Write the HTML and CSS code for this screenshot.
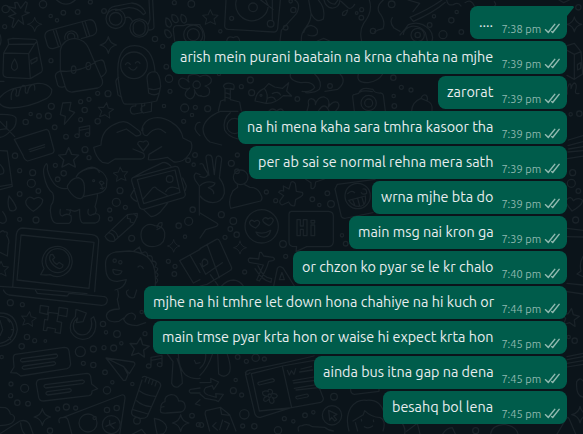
FILE: index.html
```
<!DOCTYPE html>
<html lang="en">
<head>
<meta charset="utf-8">
<title>Chat</title>
<link rel="stylesheet" href="styles.css">
</head>
<body>
<svg class="wallpaper" viewBox="0 0 1749 1302" aria-hidden="true">
<defs>
<path id="spark" d="M0-25Q4-4 25 0Q4 4 0 25Q-4 4-25 0Q-4-4 0-25Z"/>
<path id="star" d="M0-26L8-8L27-6L13 7L18 26L0 17L-18 26L-13 7L-27-6L-8-8Z"/>
<path id="note" d="M-13 12V-14L20-20V8M-13-5L20-11M-13 12A7 6 0 1 1-20 6Q-15 5-13 12M20 8A7 6 0 1 1 13 2Q18 1 20 8"/>
</defs>
<!-- top left -->
<g>
<circle cx="129" cy="13" r="11"/><circle cx="17" cy="27" r="11"/><circle cx="152" cy="48" r="5"/><circle cx="171" cy="61" r="5"/><circle cx="190" cy="38" r="7"/><circle cx="233" cy="36" r="7"/><circle cx="271" cy="6" r="6"/><circle cx="312" cy="33" r="7"/><circle cx="14" cy="80" r="6"/><circle cx="153" cy="182" r="6"/><circle cx="465" cy="117" r="8"/><circle cx="488" cy="139" r="6"/><circle cx="523" cy="8" r="6"/><circle cx="574" cy="12" r="10"/><circle cx="499" cy="200" r="7"/><circle cx="507" cy="236" r="11"/><circle cx="510" cy="274" r="6"/><circle cx="293" cy="280" r="6"/><circle cx="324" cy="281" r="9"/><circle cx="267" cy="298" r="6"/><circle cx="242" cy="305" r="6"/><circle cx="254" cy="330" r="8"/><circle cx="242" cy="359" r="6"/><circle cx="293" cy="364" r="8"/><circle cx="154" cy="319" r="9"/><circle cx="92" cy="342" r="5"/><circle cx="117" cy="348" r="7"/><circle cx="145" cy="348" r="9"/><circle cx="77" cy="366" r="8"/><circle cx="164" cy="382" r="7"/><circle cx="198" cy="410" r="7"/><circle cx="492" cy="318" r="5"/><circle cx="554" cy="324" r="12"/><circle cx="586" cy="322" r="6"/><circle cx="576" cy="345" r="5"/><circle cx="551" cy="364" r="6"/>
<path d="M22 19L47 25L44 8L52 7L62 25L77 5L82 9L75 36L88 38L66 48L71 73L55 60L40 83L36 80L42 56L26 49L48 41Z"/>
<use href="#spark" transform="translate(104 73) scale(.85)"/><use href="#spark" x="325" y="135"/>
<path d="M170 0Q198 25 226 0M0 104Q6 120 0 135M0 244H12"/>
<path d="M11 159L9 220Q9 231 20 232L91 236L123 217Q128 214 127 205L111 124Q110 118 104 118L39 115L24 118L26 133L11 159L86 161L104 132L26 133M86 161L91 236M104 132L111 124M44 177Q32 194 35 204Q43 218 52 204Q54 194 44 177M92 181L111 172V182L94 192Z"/>
<path d="M146 92L265 60Q280 56 286 72L290 88Q291 101 278 106L244 116M180 139L159 146Q146 147 142 135L135 111Q133 98 146 92M160 92L175 138M168 90L183 136M247 67L261 111M255 64L269 108M195 119A20 20 0 1 1 234 114M204 116A11 11 0 1 1 224 113"/>
<path d="M181 211V151Q187 118 224 115Q256 119 266 145L289 199L307 240Q311 258 293 264L217 276Q201 277 196 261ZM182 213Q235 219 287 187M183 212L171 218Q163 224 168 236L173 255Q178 265 193 260M286 185L303 180Q312 180 314 194L319 213Q317 223 305 230"/>
<ellipse cx="221" cy="209" rx="7" ry="11"/><ellipse cx="265" cy="198" rx="7" ry="11"/>
<path d="M0 292Q17 270 55 262L112 250Q141 248 155 268Q157 285 139 296Q84 324 30 324Q8 322 0 312M34 298Q31 276 43 266Q51 264 49 278Q44 292 56 287Q59 263 69 256Q77 255 76 268Q74 282 83 279Q85 260 97 254Q106 251 104 270"/>
<path d="M318 56A29 29 0 1 1 376 57A29 29 0 1 1 318 56M328 56A19 19 0 1 1 366 57A19 19 0 1 1 328 56M390 84A27 27 0 1 1 445 84A27 27 0 1 1 390 84M400 84A18 18 0 1 1 435 84A18 18 0 1 1 400 84M376 54Q389 46 397 63M322 43Q326 22 343 19L395 9Q426 12 437 39L430 44Q413 22 386 23Q355 30 347 31M447 0L450 58L445 72M458 0L462 82Q460 90 447 90"/>
<path d="M356 232Q346 239 348 248L354 285L365 292M354 230Q348 135 405 137Q459 139 465 215Q480 219 482 259L476 286L470 303Q415 315 374 312Q363 309 354 230M446 279L441 234Q442 215 465 215M446 279Q463 289 476 280M447 266Q463 272 480 264"/><circle cx="402" cy="196" r="40"/>
<path d="M376 194Q382 182 391 193M406 189Q413 180 420 190M387 202Q400 219 411 201M408 312L407 318Q390 317 391 331Q392 343 404 342L425 338V311M434 310V317Q421 318 423 332L430 339L454 334L455 307"/>
<path d="M498 54Q509 55 515 73Q512 83 506 81Q494 77 498 54M516 44Q532 43 535 62Q532 70 524 67Q513 61 516 44M544 43Q561 46 559 65Q552 73 547 66Q540 58 544 43M495 90Q509 88 515 106Q508 119 499 109Q492 99 495 90"/>
<path d="M600 74L562 73L551 77H530Q519 78 520 92L524 123"/><circle cx="580" cy="104" r="29"/><circle cx="580" cy="104" r="18"/>
<path d="M600 230Q589 218 567 226Q561 237 567 246Q548 226 537 241Q533 257 548 264Q561 270 569 264Q550 279 558 289Q574 306 583 286Q586 275 583 269Q592 291 604 287"/><circle cx="590" cy="254" r="11"/>
<path d="M188 309L213 307L208 331L224 337L193 373L196 349L181 344Z"/><use href="#star" transform="translate(317 330) scale(.86) rotate(8)"/><use href="#note" transform="translate(250 396) scale(.95)"/>
<path d="M0 343Q43 342 48 354Q51 380 32 392Q15 411 0 412M0 364L44 410M20 364V386L0 389M43 418L139 388Q146 389 148 398L162 450Q163 459 154 461L83 483Q73 480 69 466ZM87 449L134 434M90 455L134 441"/>
<path d="M303 435Q304 391 343 373Q373 357 391 373L418 393Q430 407 408 408L379 387L351 397M425 391Q430 360 460 354Q488 349 515 367Q543 383 549 414L573 426Q580 443 568 462M429 384Q424 407 441 407Q462 382 482 388L497 398M303 435L281 442Q287 472 307 487L325 490L345 477H424Q438 473 431 460L399 447M568 462Q550 489 522 486L502 472Q462 481 445 479L447 463L485 440M430 453L413 432Q414 420 430 426Q443 417 446 432Z"/>
<path d="M600 367Q589 366 586 380Q582 390 600 407"/>
</g>
<!-- middle left -->
<g transform="translate(0 435)">
<circle cx="45" cy="32" r="8"/><circle cx="255" cy="14" r="9"/><circle cx="267" cy="38" r="6"/><circle cx="59" cy="77" r="6"/><circle cx="98" cy="83" r="9"/><circle cx="94" cy="115" r="12"/><circle cx="115" cy="138" r="7"/><circle cx="59" cy="147" r="7"/><circle cx="166" cy="61" r="6"/><circle cx="191" cy="85" r="8"/><circle cx="173" cy="103" r="7"/><circle cx="59" cy="223" r="6"/><circle cx="108" cy="225" r="9"/><circle cx="360" cy="137" r="9"/><circle cx="349" cy="172" r="12"/><circle cx="376" cy="187" r="6"/><circle cx="329" cy="195" r="6"/><circle cx="331" cy="222" r="6"/><circle cx="395" cy="280" r="9"/><circle cx="564" cy="46" r="7"/><circle cx="585" cy="30" r="7"/><circle cx="581" cy="59" r="5"/><circle cx="578" cy="194" r="8"/><circle cx="566" cy="229" r="12"/><circle cx="536" cy="242" r="8"/><circle cx="555" cy="275" r="5"/><circle cx="505" cy="349" r="6"/><circle cx="525" cy="364" r="6"/><circle cx="523" cy="387" r="7"/>
<path d="M0 17L22 18L37 124L0 134M0 124L36 118M0 58Q17 75 9 86L0 88"/>
<use href="#star" transform="translate(206 37) scale(1.12)"/><use href="#star" transform="translate(362 87) scale(.8) rotate(-5)"/><use href="#star" transform="translate(3 371) scale(.85)"/>
<path d="M27 153Q46 176 49 189Q45 201 30 196Q20 180 27 153M8 200Q22 219 18 229Q10 239 0 232M100 199Q73 181 78 167Q86 149 102 162Q117 151 128 164Q130 180 100 199Z"/>
<path d="M132 92Q127 69 139 56Q144 59 142 73Q148 98 164 118Q180 134 202 130M132 92Q139 130 158 144Q166 164 153 181L151 197Q154 235 170 235H207Q217 230 213 212Q200 203 187 213Q177 212 181 193M207 209Q218 195 200 194M211 194Q225 204 239 193Q238 236 251 234H286Q302 229 298 211Q288 201 273 211Q260 210 265 193M281 209Q294 200 285 185Q294 154 292 147M206 117Q216 99 235 98Q252 103 253 123Q256 156 242 161Q223 162 206 135Q198 124 206 117M229 95Q242 71 281 69Q312 77 321 103L319 127Q312 143 295 145L251 155M252 74Q275 60 291 71L298 82M298 112Q306 104 312 115L304 120ZM305 121L308 132L301 130M308 132L313 127"/><circle cx="281" cy="107" r="3"/>
<path d="M398 98L525 64Q533 63 536 70L556 148Q557 154 550 158L430 193Q420 193 418 185L395 108Q394 100 398 98M412 104L525 75L540 142L431 176ZM428 163L459 128Q465 123 471 132L501 151M497 140Q509 119 534 131M399 98L431 80L488 53Q500 50 513 64M404 131L392 151Q394 162 410 169M430 193L452 214Q462 217 480 202L503 174M548 99L559 123L556 136"/><circle cx="509" cy="102" r="10"/>
<path d="M317 271L382 209L412 205Q414 213 401 236L342 289Q323 292 315 274M325 263Q343 266 345 286M334 255Q350 259 354 277M383 210L382 220L391 222V231L402 234M401 206L412 216"/>
<path d="M464 242Q443 231 427 252Q419 268 427 289Q442 311 470 303Q498 295 494 262Q489 242 464 242M471 248Q475 230 486 233Q489 247 471 254"/>
<use href="#spark" transform="translate(521 303) scale(.75)"/>
<path d="M38 427L49 268Q52 250 68 249L276 269Q296 272 296 289L284 440M51 405L63 270L282 292L267 430L51 405M0 424L45 427L261 446M0 262Q10 253 13 261Q26 258 20 272Q30 287 25 298L22 333L0 322"/>
<path d="M122 389L132 371A45 45 0 1 1 150 389Q140 391 122 389"/><circle cx="173" cy="347" r="36"/><path d="M152 329Q147 336 150 346Q160 365 178 371Q188 370 189 360L177 352L171 358Q161 354 158 343L164 338L158 328Z"/>
<path d="M347 321Q313 327 317 365Q317 410 352 409L379 404Q374 430 345 435M347 321L388 318Q455 323 464 376Q470 420 462 440M402 318L418 306L425 325M425 325Q441 313 443 333M443 333Q459 327 457 348M457 348Q475 349 465 366Q481 369 466 382Q482 388 467 398Q480 406 466 416M339 373L366 378Q362 390 350 389Q337 386 339 373M414 366Q422 358 430 370"/><circle cx="344" cy="347" r="5"/><circle cx="361" cy="352" r="5"/>
<path d="M600 313L539 347L580 414L600 404M570 330L600 383"/><path d="M600 89L588 84Q578 91 586 106L598 123V210"/>
</g>
<!-- bottom left -->
<g transform="translate(0 870)">
<circle cx="31" cy="38" r="9"/><circle cx="67" cy="44" r="6"/><circle cx="309" cy="102" r="8"/><circle cx="318" cy="127" r="5"/><circle cx="351" cy="132" r="10"/><circle cx="425" cy="66" r="5"/><circle cx="435" cy="131" r="6"/><circle cx="81" cy="141" r="8"/><circle cx="104" cy="152" r="6"/><circle cx="136" cy="153" r="4"/><circle cx="65" cy="169" r="8"/><circle cx="241" cy="185" r="15"/><circle cx="280" cy="177" r="9"/><circle cx="312" cy="173" r="6"/><circle cx="341" cy="174" r="9"/><circle cx="364" cy="160" r="5"/><circle cx="250" cy="220" r="6"/><circle cx="280" cy="225" r="8"/><circle cx="315" cy="247" r="7"/><circle cx="337" cy="277" r="5"/><circle cx="321" cy="301" r="11"/><circle cx="397" cy="282" r="5"/><circle cx="5" cy="201" r="5"/><circle cx="33" cy="282" r="6"/><circle cx="74" cy="295" r="12"/><circle cx="32" cy="317" r="6"/><circle cx="52" cy="338" r="8"/><circle cx="84" cy="341" r="7"/><circle cx="173" cy="357" r="6"/><circle cx="199" cy="351" r="9"/><circle cx="227" cy="354" r="6"/><circle cx="150" cy="422" r="8"/><circle cx="576" cy="377" r="7"/><circle cx="595" cy="404" r="6"/>
<path d="M10 0Q16 12 27 15L305 46Q321 46 322 30Q321 19 307 19L207 10L202 18L112 10L106 0M353 0Q358 16 352 28L358 57Q320 58 319 78Q322 100 357 94L371 84M371 88Q382 67 398 70Q412 77 403 88M372 90Q378 106 411 107L437 98M410 0L403 22Q390 28 381 14Q376 2 385 0"/>
<path d="M121 46L146 50L142 73L119 68ZM177 52L203 56L200 80L175 75ZM146 67L175 71L171 94L185 97L181 130L165 127L167 117L142 112L140 122L130 121L134 88L143 90Z"/>
<path d="M0 69Q48 69 52 119Q45 164 0 169M0 79Q38 81 41 119Q38 152 0 160M0 91L8 119L0 137M23 89L29 96M34 119H41M26 142L32 149"/><use href="#star" transform="translate(86 86) scale(.82) rotate(8)"/>
<path d="M228 58L259 69L249 95L229 98L233 84Q215 97 222 119Q235 141 260 132Q281 117 273 86L281 80L287 97Q291 129 267 144Q233 157 213 126Q205 101 226 80Z"/>
<path d="M46 193L193 172Q205 172 207 183L212 222Q211 232 201 236L62 258L50 249L32 248L42 231L40 206Q39 195 46 193M65 206L169 192Q178 199 166 204L66 216Q57 212 65 206M71 228L163 215Q171 221 162 225L72 238Q61 234 71 228"/>
<path d="M119 268L261 250Q270 250 272 260L275 282L293 296L276 303Q277 315 267 317L131 333Q118 333 116 322L109 282Q109 270 119 268M135 284L248 270Q259 275 247 281L137 294Q128 289 135 284M142 305L209 296Q219 300 209 306L143 315Q133 310 142 305"/>
<path d="M318 204L401 216Q406 218 404 225L388 251L371 230L384 254L377 271L370 271ZM318 204L371 230"/>
<use href="#star" transform="translate(418 171) rotate(8) scale(1.08)"/><use href="#note" transform="translate(466 216)"/>
<path d="M427 262Q433 257 440 261L474 275Q483 279 482 288L442 379Q435 387 419 385L399 377Q393 371 395 364L426 270M439 264L435 276M449 268L445 280M459 272L455 284M469 276L465 288M419 303Q437 317 466 319M410 332Q426 347 453 350M399 359L444 372"/><circle cx="411" cy="392" r="10"/>
<path d="M492 350Q478 350 482 366Q487 371 501 369L543 366Q559 360 555 345Q552 331 536 333Q532 313 513 314Q493 317 495 335Q481 338 482 359M502 192L519 215L515 280Q520 294 534 291L547 280Q547 246 531 205M535 192Q536 236 556 254Q578 269 600 265M583 211L588 221L600 218M600 294L572 298Q563 302 572 309H600M600 329L586 342L600 346"/>
<use href="#spark" transform="translate(127 381)"/><use href="#spark" transform="translate(542 399)"/>
<path d="M0 352L16 353Q29 359 31 372Q49 376 41 393Q35 405 0 407M0 431L60 393Q85 386 92 411L100 434M62 399Q64 424 76 434M178 398Q173 382 188 383Q201 378 205 393L216 434M188 383L365 315Q375 312 375 325L359 434M463 385Q495 391 500 412Q498 427 488 432L472 434Q466 412 463 385"/>
<circle cx="321" cy="360" r="8"/><circle cx="350" cy="354" r="8"/><circle cx="264" cy="399" r="27"/><circle cx="334" cy="404" r="27"/><circle cx="284" cy="384" r="5"/><path d="M329 391V404L318 409M330 404L342 415M330 404L346 398M394 434L425 418L438 434"/>
</g>
<!-- top centre -->
<g transform="translate(600 0)">
<path d="M78 0L74 77Q74 87 85 88L221 96Q231 96 233 85L241 0M109 0A49 49 0 1 0 205 17L197 0M146 22A13 13 0 1 0 172 22A13 13 0 1 0 146 22M217 0V62M182 0L219 28"/><circle cx="212" cy="71" r="10"/><circle cx="95" cy="55" r="6"/><circle cx="280" cy="30" r="8"/><circle cx="61" cy="94" r="5"/><circle cx="272" cy="4" r="5"/>
<use href="#star" transform="translate(31 51) scale(.85)"/><path d="M0 76Q19 101 12 123M80 123Q84 105 100 113Q116 103 119 123M284 0Q304 11 290 40L244 91L240 123M326 0L333 40Q334 60 319 80Q302 100 304 123M311 98Q316 78 333 76Q358 83 351 102Q343 112 324 105M333 40Q348 72 370 57Q377 24 355 0M372 0Q378 23 395 24Q418 25 420 0M382 0Q391 13 405 12L414 0M423 4L444 23Q454 30 464 13M443 30Q424 34 428 46Q438 49 443 30M508 0Q520 35 491 70Q477 93 485 123M550 0Q527 18 538 38Q558 63 549 86Q534 88 523 96M577 53Q567 67 582 84L600 94M352 123L371 115L389 123"/>
<circle cx="485" cy="29" r="6"/><circle cx="470" cy="39" r="4"/><circle cx="484" cy="53" r="7"/><circle cx="575" cy="13" r="10"/><circle cx="257" cy="83" r="7"/><circle cx="519" cy="93" r="8"/>
<circle cx="57" cy="222" r="5"/><circle cx="151" cy="240" r="9"/><circle cx="124" cy="260" r="6"/><circle cx="155" cy="278" r="9"/><circle cx="23" cy="326" r="9"/><circle cx="292" cy="297" r="7"/><circle cx="390" cy="258" r="7"/><circle cx="580" cy="233" r="8"/><circle cx="581" cy="288" r="5"/><circle cx="583" cy="318" r="7"/>
<path d="M0 230Q24 218 34 238Q36 252 15 258Q35 264 26 284Q15 294 0 287M70 258Q77 244 98 252Q105 255 101 268L91 265V299L119 306L124 333M75 303V266L70 258M75 265L99 268M75 278L91 283M75 291L91 296M75 299L62 303L55 333M9 386Q14 353 61 334H114M9 386Q9 409 30 426L65 435M91 338Q67 356 74 390Q83 409 114 417"/><circle cx="104" cy="378" r="23"/>
<path d="M165 303Q168 275 193 265L206 251L224 261L248 265L266 248L260 273L275 288L250 287Q225 312 198 310ZM193 265Q208 284 198 310M217 281Q236 272 242 285M204 294Q222 287 226 300"/><circle cx="183" cy="286" r="3"/>
<path d="M271 222Q267 242 303 248Q339 243 344 263Q333 278 306 274M344 222Q369 246 358 268Q344 280 317 278M420 222Q442 245 413 268L375 274M475 222Q467 250 505 248Q536 243 548 222M458 291Q457 284 465 283L476 280Q482 264 500 265L519 268Q523 280 542 279Q549 280 550 286L556 333M458 291L463 333M479 277Q489 270 517 275"/><circle cx="506" cy="309" r="23"/><circle cx="506" cy="309" r="12"/>
<path d="M321 333L326 315Q321 297 334 296Q349 299 346 314M346 314Q354 289 373 291Q393 298 385 321M385 321Q399 302 413 307Q423 317 407 333M355 333Q374 303 387 333M207 333Q217 321 230 333Q244 321 250 333"/>
</g>
<!-- middle centre -->
<g transform="translate(600 435)">
<circle cx="112" cy="30" r="6"/><circle cx="94" cy="55" r="9"/><circle cx="111" cy="79" r="7"/><circle cx="199" cy="141" r="6"/><circle cx="227" cy="167" r="6"/><circle cx="337" cy="163" r="7"/><circle cx="382" cy="145" r="7"/><circle cx="393" cy="177" r="10"/><circle cx="358" cy="180" r="5"/><circle cx="64" cy="209" r="9"/><circle cx="100" cy="228" r="10"/><circle cx="91" cy="252" r="7"/><circle cx="110" cy="269" r="8"/><circle cx="75" cy="277" r="6"/><circle cx="249" cy="297" r="10"/><circle cx="257" cy="334" r="6"/><circle cx="134" cy="381" r="6"/><circle cx="426" cy="271" r="5"/><circle cx="437" cy="296" r="7"/><circle cx="122" cy="97" r="22"/><circle cx="185" cy="244" r="50"/><circle cx="473" cy="153" r="38"/>
<path d="M0 57Q9 52 13 68L27 91L18 40Q17 29 27 30Q36 30 37 43L43 89L48 42Q50 30 60 34Q67 38 64 50L58 99Q75 120 73 145Q66 172 38 173Q14 171 0 153M0 94Q18 102 23 89M0 122Q18 105 45 114Q45 122 25 128Q43 136 41 146"/>
<path d="M112 118L113 127L99 137Q83 164 92 190L182 168Q190 160 182 148Q174 127 150 127L134 119M250 123L267 132L273 112Q281 107 286 116L289 139L307 142Q311 149 304 154L287 164L284 182Q273 185 266 171L246 180Q237 177 240 167L251 152L236 142Q239 135 251 138ZM405 132L424 215Q429 222 440 219L519 203M405 132L412 118L525 103M316 102L333 113V129Q340 135 345 124L347 111L373 102"/>
<path d="M443 146Q454 134 464 143M489 132Q501 130 500 145Q488 151 484 143M446 166L496 153Q500 178 485 183Q462 189 446 166M458 164L464 179M473 160L479 183M486 157L491 176"/>
<path d="M0 204L50 234Q58 239 49 244L17 254L0 279M167 249Q146 240 149 231Q154 221 163 230Q174 221 179 232Q179 240 167 249M207 242Q185 231 189 223Q196 214 204 222Q215 214 220 225Q219 234 207 242M168 261Q191 270 212 256Q209 272 195 276Q175 278 168 261"/>
<path d="M274 199H386Q400 200 400 214V291Q399 303 387 305H320L288 320L290 305L277 304Q267 302 267 291V208Q267 200 274 199M291 224H301V243H310V224H321V272H310V253H301V272H291ZM333 240H344V272H333ZM333 226H344V234H333Z"/>
<path d="M0 311L49 283Q55 281 59 288L95 368Q96 374 88 378L21 418L0 423M21 298L58 398M0 355L17 388L67 353M9 365Q2 349 12 342Q25 344 23 356ZM31 389L54 421"/><use href="#spark" transform="translate(120 308) scale(.78)"/>
<path d="M184 322L191 333L219 337Q229 343 218 347L206 349Q200 375 178 408L170 405L190 360L148 352Q141 344 149 339L176 342L179 322ZM174 362Q190 400 215 401L213 412Q187 407 165 371M221 423L232 370Q239 360 250 370L283 423M238 404H253L246 382ZM65 423Q81 405 101 405Q120 407 130 423"/>
</g>
<!-- bottom centre -->
<g transform="translate(600 870)">
<circle cx="113" cy="201" r="7"/><circle cx="139" cy="214" r="6"/><circle cx="167" cy="203" r="11"/><circle cx="193" cy="207" r="6"/><circle cx="107" cy="270" r="5"/><circle cx="100" cy="302" r="9"/><circle cx="125" cy="315" r="6"/><circle cx="133" cy="373" r="14"/><circle cx="128" cy="408" r="6"/><circle cx="163" cy="409" r="8"/><circle cx="4" cy="405" r="7"/><circle cx="253" cy="386" r="6"/><circle cx="280" cy="394" r="5"/><circle cx="315" cy="376" r="7"/><circle cx="340" cy="367" r="5"/><circle cx="402" cy="320" r="10"/><circle cx="234" cy="421" r="11"/><circle cx="396" cy="376" r="29"/>
<path d="M386 361L411 373L401 378L410 389L404 393L395 382L389 391Z"/>
<path d="M145 241L246 220L342 198M145 241Q135 244 137 255L165 373Q170 384 181 382L274 353M136 247Q140 259 150 248M154 251L247 228L275 353M154 251L178 363L275 353L362 337Q371 333 370 325L359 296M247 228L343 211M175 277L218 266Q227 271 220 275L178 285Q171 281 175 277M262 241L268 255L274 242L282 253L287 236M303 237L335 229M299 246L338 240M279 272L342 261M281 279L347 271M283 295L349 284M288 300L355 293M290 319L321 312Q329 317 322 321L292 327Q284 323 290 319"/>
<path d="M205 305Q202 295 214 299Q221 305 215 312Q229 309 232 317Q228 328 217 322Q227 334 218 340Q207 341 208 326Q198 339 191 331Q190 321 202 319Q185 317 188 306Q198 300 205 305"/><circle cx="209" cy="317" r="5"/>
<path d="M0 235Q19 218 17 193M0 256Q24 233 37 193M53 193L56 252Q73 266 86 251Q97 238 82 193M0 278L33 277L32 265L56 276L41 298L37 287L17 293Q5 307 24 315L49 322L47 311L70 313L55 335L48 331L15 325L0 312M18 362L61 352L89 374L108 423M18 362Q14 367 16 375L29 423M61 352L65 373L89 376M48 398L38 408L52 420M74 394L88 401L80 419M59 419L68 390M296 423Q290 408 306 407Q323 400 337 410L374 412Q385 422 400 423M447 423Q435 381 453 352Q472 327 499 331Q541 327 552 369M459 393L490 374L494 362Q512 381 541 383Q559 392 549 423M473 423L466 398M452 297Q451 311 463 313L537 304V297M484 388L485 393M520 390L521 395M493 410Q505 418 518 408"/>
</g>
<!-- right margin -->
<g transform="translate(1200 0)">
<path d="M24 0L59 10L39 35M30 52Q83 30 126 0M30 52L40 64Q98 40 136 7M0 105Q16 88 25 74Q60 60 88 88Q102 104 96 123M10 103Q12 84 34 79Q61 76 76 98L82 123M477 0L491 8L508 0"/><circle cx="53" cy="105" r="20"/><circle cx="53" cy="105" r="8"/><circle cx="89" cy="75" r="7"/><circle cx="102" cy="49" r="5"/><circle cx="129" cy="104" r="12"/><circle cx="154" cy="61" r="8"/><circle cx="184" cy="96" r="7"/><circle cx="170" cy="36" r="5"/>
<path d="M140 0Q142 18 160 14Q175 5 183 18M195 8Q214 -5 223 18M283 5Q291 16 283 18"/><circle cx="535" cy="22" r="8"/><use href="#spark" transform="translate(523 73) scale(.9)"/>
<path d="M501 137L523 130L543 155L548 222L523 238L501 226M501 151L523 163L543 155M523 163V238M532 194L542 188V205L533 210ZM502 282Q500 263 507 253Q514 247 513 266Q516 253 522 249Q531 250 528 266Q522 285 537 280"/>
<circle cx="512" cy="343" r="5"/><circle cx="538" cy="341" r="8"/><circle cx="33" cy="270" r="6"/><circle cx="4" cy="262" r="6"/>
<path d="M35 333Q36 306 63 295Q69 281 79 286Q85 294 81 303Q100 309 96 333M63 295L81 303"/>
<path d="M505 420L549 407M504 437L549 425M506 447L549 440M504 456L549 452M502 476L549 468"/><circle cx="518" cy="518" r="9"/><circle cx="514" cy="550" r="12"/><circle cx="535" cy="573" r="7"/><circle cx="527" cy="660" r="9"/>
<path d="M516 633Q491 606 501 598Q512 586 520 602Q532 591 547 600Q550 614 516 633M501 685L549 691M501 710L549 711M549 769Q537 790 543 813L531 822L549 830M501 850L549 855M501 875L549 882"/>
<use href="#star" transform="translate(511 951) rotate(8)"/><circle cx="524" cy="1022" r="8"/><circle cx="506" cy="1011" r="5"/>
<path d="M501 1070L549 1060M501 1079L549 1070M501 1090L549 1082M501 1101L549 1093M530 1145Q540 1130 549 1143M530 1145Q527 1188 549 1191"/><use href="#spark" transform="translate(540 1244)"/><circle cx="227" cy="1292" r="9"/>
<path d="M0 1260Q19 1284 14 1302M20 1294L52 1270L60 1302M128 1302Q139 1284 157 1283L166 1302M272 1302Q274 1276 314 1273Q350 1280 354 1302M471 1302L501 1252Q505 1251 508 1258L527 1302"/>
</g>
</svg>
<svg class="defs" aria-hidden="true"><symbol id="ticks" viewBox="0 0 16 11"><path d="M11.071.653a.457.457 0 0 0-.304-.102.493.493 0 0 0-.381.178l-6.19 7.636-2.405-2.272a.463.463 0 0 0-.336-.146.47.47 0 0 0-.343.146l-.311.31a.445.445 0 0 0-.14.337c0 .136.047.25.14.343l2.996 2.996a.724.724 0 0 0 .501.203.697.697 0 0 0 .546-.266l6.646-8.417a.497.497 0 0 0 .108-.299.441.441 0 0 0-.19-.374L11.071.653Zm-2.45 7.674a15.31 15.31 0 0 1-.546-.355.43.43 0 0 0-.317-.12.46.46 0 0 0-.362.158l-.292.33a.482.482 0 0 0 .013.666l1.079 1.073c.135.135.3.203.495.203a.699.699 0 0 0 .552-.267l6.62-8.391a.446.446 0 0 0 .109-.298.487.487 0 0 0-.178-.375l-.355-.273a.487.487 0 0 0-.673.076L8.62 8.327Z"/></symbol></svg>
<main class="chat">
<div class="msg first"><p>....</p><time>7:38 pm</time><svg><use href="#ticks"/></svg></div>
<div class="msg"><p>arish mein purani baatain na krna chahta na mjhe</p><time>7:39 pm</time><svg><use href="#ticks"/></svg></div>
<div class="msg"><p>zarorat</p><time>7:39 pm</time><svg><use href="#ticks"/></svg></div>
<div class="msg"><p>na hi mena kaha sara tmhra kasoor tha</p><time>7:39 pm</time><svg><use href="#ticks"/></svg></div>
<div class="msg"><p>per ab sai se normal rehna mera sath</p><time>7:39 pm</time><svg><use href="#ticks"/></svg></div>
<div class="msg"><p>wrna mjhe bta do</p><time>7:39 pm</time><svg><use href="#ticks"/></svg></div>
<div class="msg"><p>main msg nai kron ga</p><time>7:39 pm</time><svg><use href="#ticks"/></svg></div>
<div class="msg"><p>or chzon ko pyar se le kr chalo</p><time>7:40 pm</time><svg><use href="#ticks"/></svg></div>
<div class="msg"><p>mjhe na hi tmhre let down hona chahiye na hi kuch or</p><time>7:44 pm</time><svg><use href="#ticks"/></svg></div>
<div class="msg"><p>main tmse pyar krta hon or waise hi expect krta hon</p><time>7:45 pm</time><svg><use href="#ticks"/></svg></div>
<div class="msg"><p>ainda bus itna gap na dena</p><time>7:45 pm</time><svg><use href="#ticks"/></svg></div>
<div class="msg"><p>besahq bol lena</p><time>7:45 pm</time><svg><use href="#ticks"/></svg></div>
</main>
</body>
</html>
```
FILE: styles.css
```
* { box-sizing: border-box; }
body {
  margin: 0;
  width: 583px;
  height: 434px;
  overflow: hidden;
  background: #0b141a;
  font-family: Ubuntu, "Noto Sans", sans-serif;
}
.wallpaper {
  position: absolute;
  inset: 0;
  width: 583px;
  height: 434px;
  fill: none;
  stroke: #1a2329;
  stroke-width: 3.8;
  stroke-linejoin: round;
  stroke-linecap: round;
}
.defs { position: absolute; width: 0; height: 0; }
.chat {
  position: relative;
  display: flex;
  flex-direction: column;
  align-items: flex-end;
  gap: 2px;
  padding: 6px 16px 0 0;
}
.msg {
  position: relative;
  display: flex;
  height: 33px;
  padding: 0 7px 0 9px;
  background: #005c4b;
  border-radius: 7.5px;
  white-space: nowrap;
}
.msg p {
  margin: 0;
  font-size: 14.38px;
  line-height: 32px;
  color: #e9edef;
}
.msg time {
  width: 42.6px;
  margin-left: 8.4px;
  padding-top: 14px;
  font-size: 11px;
  line-height: 18px;
  color: #8fb8af;
}
.msg svg {
  width: 16px;
  height: 11px;
  margin-top: 17px;
  fill: #8fb8af;
}
.first { border-top-right-radius: 0; }
.first::after {
  content: "";
  position: absolute;
  top: 0;
  left: 100%;
  width: 8px;
  height: 11px;
  margin-left: -1px;
  background: #005c4b;
  clip-path: polygon(0 0, 7px 0, 8px 1px, 7.5px 2px, 1px 10px, 0 11px);
}
.msg:nth-child(1) p { width: 14px; }
.msg:nth-child(2) p { width: 313px; }
.msg:nth-child(3) p { width: 46px; }
.msg:nth-child(4) p { width: 246px; }
.msg:nth-child(5) p { width: 235px; }
.msg:nth-child(6) p { width: 112px; }
.msg:nth-child(7) p { width: 135px; }
.msg:nth-child(8) p { width: 191px; }
.msg:nth-child(9) p { width: 340px; }
.msg:nth-child(10) p { width: 331px; }
.msg:nth-child(11) p { width: 170px; }
.msg:nth-child(12) p { width: 101px; }
```
